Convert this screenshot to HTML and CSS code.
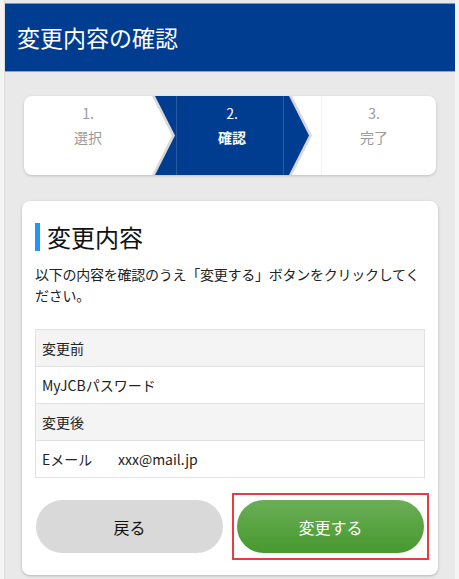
FILE: index.html
```html
<!DOCTYPE html>
<html lang="ja">
<head>
    <meta charset="UTF-8">
    <meta name="viewport" content="width=device-width, initial-scale=1.0">
    <title>変更内容の確認</title>
    <link rel="stylesheet" href="styles.css">
</head>
<body>
    <div class="page">
        <header class="header">
            <h1>変更内容の確認</h1>
        </header>

        <ol class="steps">
            <li class="step">
                <span class="step-num">1.</span>
                <span class="step-label">選択</span>
            </li>
            <li class="step step-current">
                <span class="step-num">2.</span>
                <span class="step-label">確認</span>
            </li>
            <li class="step step-last">
                <span class="step-num">3.</span>
                <span class="step-label">完了</span>
            </li>
        </ol>

        <section class="card">
            <h2 class="card-title">変更内容</h2>
            <p class="lead">以下の内容を確認のうえ「変更する」ボタンをクリックしてください。</p>

            <table class="detail">
                <tr><th>変更前</th></tr>
                <tr><td>MyJCBパスワード</td></tr>
                <tr><th>変更後</th></tr>
                <tr><td><span class="item-name">Eメール</span>xxx@mail.jp</td></tr>
            </table>

            <!-- ボタン -->
            <div class="actions">
                <button class="btn btn-back" type="button">戻る</button>
                <div class="mark">
                    <button class="btn btn-submit" type="button">変更する</button>
                </div>
            </div>
        </section>
    </div>
</body>
</html>
```

FILE: styles.css
```css
body {
    margin: 0;
    background-color: #f4f4f4;
    font-family: "Noto Sans CJK JP", "Noto Sans", sans-serif;
    color: #222;
}
.page {
    margin: 0 4px;
    min-height: 579px;
    padding-top: 3px;
    background-color: #e9e9e9;
    border-left: 1px solid #dedede;
    box-sizing: border-box;
}
.header {
    height: 67px;
    background-color: #003c8f;
    border-top: 1px solid #7d97c4;
    border-bottom: 1px solid #8ba2cc;
}
.header h1 {
    margin: 0;
    padding-left: 12px;
    font-size: 23px;
    font-weight: normal;
    line-height: 67px;
    color: #fff;
}
.steps {
    display: flex;
    height: 79px;
    margin: 24px 19px 0;
    padding: 0;
    list-style: none;
    background-color: #fff;
    border-radius: 8px;
    box-shadow: 0 1px 3px rgba(0, 0, 0, 0.18);
    overflow: hidden;
}
.step {
    width: 128px;
    padding-top: 5px;
    text-align: center;
    color: #9a9a9a;
    font-size: 14px;
    line-height: 24px;
}
.step span {
    display: block;
}
.step-current {
    position: relative;
    width: 160px;
    color: #fff;
    background-color: #d8d8d8;
    clip-path: polygon(0 0, 140px 0, 160px 50%, 140px 100%, 0 100%, 20px 50%);
}
.step-current::before {
    content: "";
    position: absolute;
    top: 0;
    left: 0;
    right: 0;
    bottom: 0;
    background-color: #003c8f;
    clip-path: polygon(3px 0, 137px 0, 157px 50%, 137px 100%, 3px 100%, 23px 50%);
}
.step-current::after {
    content: "";
    position: absolute;
    top: 0;
    bottom: 0;
    left: 24px;
    width: 106px;
    border-left: 1px solid #2c58a0;
    border-right: 1px solid #2c58a0;
}
.step-current span {
    position: relative;
    z-index: 1;
}
.step-current .step-label {
    font-weight: bold;
}
.step-last {
    flex: 1;
    box-shadow: inset 9px 0 0 #fff, inset 10px 0 0 #f2f2f2;
}
.card {
    margin: 26px 17px 0;
    padding: 22px 13px 15px;
    background-color: #fff;
    border-radius: 8px;
    box-shadow: 0 1px 3px rgba(0, 0, 0, 0.22);
}
.card-title {
    margin: 0;
    padding-left: 7px;
    border-left: 5px solid #2196f3;
    font-size: 24px;
    font-weight: normal;
    line-height: 28px;
    color: #111;
}
.lead {
    margin: 13px 0 0;
    font-size: 14px;
    line-height: 21px;
    letter-spacing: -0.25px;
}
.detail {
    width: 100%;
    margin-top: 23px;
    border-collapse: collapse;
    font-size: 14px;
}
.detail th,
.detail td {
    height: 20px;
    padding: 8px 6px;
    border: 1px solid #e2e2e2;
    text-align: left;
    font-weight: normal;
    line-height: 20px;
}
.detail th {
    background-color: #f4f4f4;
}
.item-name {
    display: inline-block;
    width: 76px;
}
.actions {
    display: grid;
    grid-template-columns: 187px 197px;
    column-gap: 9px;
    align-items: center;
    margin: 15px 0 0 1px;
}
.mark {
    padding: 5px 3px;
    border: 2px solid #ea3c40;
}
.btn {
    display: block;
    width: 187px;
    height: 53px;
    border: none;
    border-radius: 27px;
    font-family: inherit;
    font-size: 16px;
    cursor: pointer;
}
.btn-back {
    background-color: #d9d9d9;
    color: #111;
}
.btn-submit {
    background: linear-gradient(#6aae56, #47992f);
    color: #fff;
}
```
